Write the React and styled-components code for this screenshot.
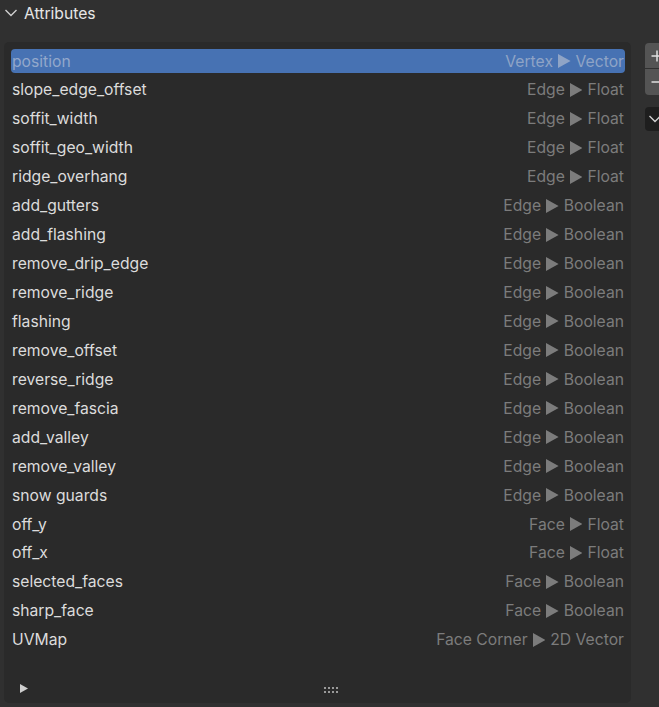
import React from 'react';
import styled, { createGlobalStyle } from 'styled-components';

const GlobalStyle = createGlobalStyle`
  html, body {
    margin: 0;
    padding: 0;
    background: #303030;
    overflow: hidden;
  }
  body {
    font-family: Inter, "Noto Sans", sans-serif;
    font-size: 15.7px;
  }
`;

const Page = styled.div`
  width: 659px;
  height: 707px;
  overflow: hidden;
  background: #303030;
`;

const Header = styled.div`
  display: flex;
  align-items: center;
  gap: 6px;
  height: 26px;
  padding-left: 4px;
  color: #e6e6e6;
`;

const Body = styled.div`
  display: flex;
  align-items: flex-start;
  margin-top: 16px;
  padding-left: 4px;
`;

const ListBox = styled.div`
  flex: 0 0 627px;
  box-sizing: border-box;
  height: 661px;
  background: #2a2a2a;
  border-radius: 5px;
  padding: 7px 6px 0 7px;
  display: flex;
  flex-direction: column;
`;

const Rows = styled.div`
  display: flex;
  flex-direction: column;
  gap: 4.95px;
`;

const Row = styled.div`
  display: flex;
  align-items: center;
  justify-content: space-between;
  height: 24px;
  padding: 0 1px;
  border-radius: 4px;
  background: ${(p) => (p.$selected ? '#4772b3' : 'transparent')};
`;

const Name = styled.span`
  color: ${(p) => (p.$selected ? '#93a8cb' : '#dcdcdc')};
`;

const Type = styled.span`
  display: flex;
  align-items: center;
  gap: 5px;
  color: ${(p) => (p.$selected ? '#8fa4c6' : '#7c7c7c')};
`;

const Footer = styled.div`
  margin-top: auto;
  height: 20px;
  margin-bottom: 5px;
  display: flex;
  align-items: center;
  position: relative;
  padding-left: 9px;
  box-sizing: border-box;
`;

const Grip = styled.div`
  position: absolute;
  left: 313px;
  top: 9px;
  display: grid;
  grid-template-columns: repeat(4, 2px);
  gap: 2px 2px;
`;

const GripDot = styled.span`
  width: 2px;
  height: 2px;
  background: #9a9a9a;
`;

const Side = styled.div`
  margin-left: 14px;
  display: flex;
  flex-direction: column;
  width: 24px;
  flex-shrink: 0;
  margin-top: 1px;
`;

const SideButton = styled.div`
  height: ${(p) => p.$h}px;
  background: #545454;
  border-radius: ${(p) => p.$radius};
  display: flex;
  align-items: center;
  padding-left: 6px;
  margin-bottom: ${(p) => p.$mb || 0}px;
`;

const MenuButton = styled.div`
  height: 24px;
  background: #1e1e1e;
  border-radius: 4px;
  display: flex;
  align-items: center;
  padding-left: 3px;
`;

const Tri = ({ color, size = 12 }) => (
  <svg width={size * 0.9} height={size} viewBox="0 0 9 10">
    <path d="M0 0 L9 5 L0 10 Z" fill={color} />
  </svg>
);

const Chevron = ({ color = '#cfcfcf' }) => (
  <svg width="14" height="10" viewBox="0 0 14 10">
    <path d="M1.5 2 L7 7.5 L12.5 2" fill="none" stroke={color} strokeWidth="1.4" />
  </svg>
);

const PlusIcon = () => (
  <svg width="12" height="12" viewBox="0 0 12 12">
    <path d="M6 0.5 V11.5 M0.5 6 H11.5" stroke="#e0e0e0" strokeWidth="1.5" />
  </svg>
);

const MinusIcon = () => (
  <svg width="12" height="12" viewBox="0 0 12 12">
    <path d="M0.5 6 H11.5" stroke="#e0e0e0" strokeWidth="1.5" />
  </svg>
);

const attributes = [
  ['position', 'Vertex', 'Vector'],
  ['slope_edge_offset', 'Edge', 'Float'],
  ['soffit_width', 'Edge', 'Float'],
  ['soffit_geo_width', 'Edge', 'Float'],
  ['ridge_overhang', 'Edge', 'Float'],
  ['add_gutters', 'Edge', 'Boolean'],
  ['add_flashing', 'Edge', 'Boolean'],
  ['remove_drip_edge', 'Edge', 'Boolean'],
  ['remove_ridge', 'Edge', 'Boolean'],
  ['flashing', 'Edge', 'Boolean'],
  ['remove_offset', 'Edge', 'Boolean'],
  ['reverse_ridge', 'Edge', 'Boolean'],
  ['remove_fascia', 'Edge', 'Boolean'],
  ['add_valley', 'Edge', 'Boolean'],
  ['remove_valley', 'Edge', 'Boolean'],
  ['snow guards', 'Edge', 'Boolean'],
  ['off_y', 'Face', 'Float'],
  ['off_x', 'Face', 'Float'],
  ['selected_faces', 'Face', 'Boolean'],
  ['sharp_face', 'Face', 'Boolean'],
  ['UVMap', 'Face Corner', '2D Vector'],
];

export default function App() {
  return (
    <Page>
      <GlobalStyle />
      <Header>
        <Chevron />
        <span>Attributes</span>
      </Header>
      <Body>
        <ListBox>
          <Rows>
            {attributes.map(([name, domain, type], i) => {
              const sel = i === 0;
              return (
                <Row key={name} $selected={sel}>
                  <Name $selected={sel}>{name}</Name>
                  <Type $selected={sel}>
                    {domain}
                    <Tri color={sel ? '#8fa4c6' : '#7c7c7c'} size={14} />
                    {type}
                  </Type>
                </Row>
              );
            })}
          </Rows>
          <Footer>
            <Tri color="#cfcfcf" size={9} />
            <Grip>
              {Array.from({ length: 8 }).map((_, i) => (
                <GripDot key={i} />
              ))}
            </Grip>
          </Footer>
        </ListBox>
        <Side>
          <SideButton $h={25} $radius="4px 4px 0 0" $mb={1}>
            <PlusIcon />
          </SideButton>
          <SideButton $h={26} $radius="0 0 4px 4px" $mb={12}>
            <MinusIcon />
          </SideButton>
          <MenuButton>
            <Chevron color="#d0d0d0" />
          </MenuButton>
        </Side>
      </Body>
    </Page>
  );
}
